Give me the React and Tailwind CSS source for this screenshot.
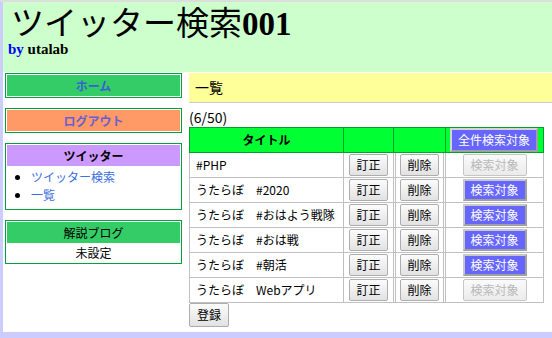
import React from "react";

const rows = [
  { title: "#PHP", target: false },
  { title: "うたらぼ　#2020", target: true },
  { title: "うたらぼ　#おはよう戦隊", target: true },
  { title: "うたらぼ　#おは戦", target: true },
  { title: "うたらぼ　#朝活", target: true },
  { title: "うたらぼ　Webアプリ", target: false },
];

const grayBtn =
  "h-[22px] rounded-[2px] border border-[#adadad] bg-linear-to-b from-[#fcfcfc] to-[#e2e2e2] text-[12px] leading-[20px] text-black";

const SideBox = ({ children }) => (
  <div className="border border-[#00a03c] p-px">{children}</div>
);

export default function App() {
  return (
    <div className="min-h-screen bg-[#ccccff] border-t-2 border-[#dddddd] pl-[3px] font-['Noto_Sans_CJK_JP',sans-serif] text-[12px] text-black">
      <div className="bg-white pb-[5px]">
        {/* Header */}
        <header className="h-[70px] bg-[#ccffcc] pt-[5px]">
          <h1 className="ml-[8px] font-['Liberation_Serif','Noto_Sans_CJK_JP',serif] text-[33px] leading-[34px] whitespace-nowrap">
            <span className="font-normal">ツイッター検索</span>
            <span className="font-bold">001</span>
          </h1>
          <div className="ml-[5px] font-['Liberation_Serif',serif] text-[15px] font-bold leading-[16px]">
            <span className="text-[#0000ff]">by</span> utalab
          </div>
        </header>

        <div className="flex items-start pt-px">
          {/* Sidebar */}
          <aside className="ml-[2px] w-[177px] flex flex-col gap-[10px]">
            <SideBox>
              <div className="h-[21px] bg-[#33cc66] text-center font-bold leading-[21px] text-[#3a5fd0]">
                ホーム
              </div>
            </SideBox>
            <SideBox>
              <div className="h-[21px] bg-[#ff9966] text-center font-bold leading-[21px] text-[#6a5fd0]">
                ログアウト
              </div>
            </SideBox>
            <SideBox>
              <div className="h-[21px] bg-[#cc99ff] text-center font-bold leading-[21px]">
                ツイッター
              </div>
              <ul className="list-disc pl-[24px] pt-[2px] pb-[4px] leading-[18px] text-[#3b6ee0] marker:text-black">
                <li>ツイッター検索</li>
                <li>一覧</li>
              </ul>
            </SideBox>
            <SideBox>
              <div className="h-[21px] bg-[#33cc66] text-center leading-[21px]">
                解説ブログ
              </div>
              <div className="text-center leading-[19px]">未設定</div>
            </SideBox>
          </aside>

          {/* Main */}
          <main className="ml-[7px] flex-1">
            <div className="h-[30px] bg-[#ffff99] border-b border-[#cccccc] pl-[6px] text-[14px] leading-[29px]">
              一覧
            </div>
            <div className="h-[24px] pt-[4px] text-[14px] leading-[20px]">(6/50)</div>

            <div className="w-[355px]">
              <div className="flex h-[26px] border border-[#00a030] bg-[#00ff33]">
                <div className="w-[154px] border-r border-[#00a030] text-center font-bold leading-[24px]">
                  タイトル
                </div>
                <div className="w-[50px] border-r border-[#00a030]" />
                <div className="w-[52px] border-r border-[#00a030]" />
                <div className="flex-1 pl-[4px] pr-[4px]">
                  <button className="h-[24px] w-[88px] border-2 border-[#a0a0a0] border-t-[#d4d4d4] border-l-[#d4d4d4] bg-[#6666ff] text-[12px] leading-[18px] text-white">
                    全件検索対象
                  </button>
                </div>
              </div>

              {rows.map((row, i) => (
                <div
                  key={i}
                  className="flex h-[25px] border-x border-b border-[#c0c0c0]"
                >
                  <div className="w-[154px] border-r border-[#c0c0c0] pl-[6px] leading-[24px] whitespace-nowrap">
                    {row.title}
                  </div>
                  <div className="w-[50px] border-r border-[#c0c0c0] flex items-center justify-center">
                    <button className={`${grayBtn} w-[39px]`}>訂正</button>
                  </div>
                  <div className="w-[2px] border-r border-[#c0c0c0]" />
                  <div className="w-[48px] border-r border-[#c0c0c0] flex items-center justify-center">
                    <button className={`${grayBtn} w-[39px]`}>削除</button>
                  </div>
                  <div className="w-[2px] border-r border-[#c0c0c0]" />
                  <div className="flex-1 flex items-center justify-center">
                    {row.target ? (
                      <button className="h-[22px] w-[64px] border-2 border-[#a0a0a0] border-t-[#c8c8c8] border-l-[#c8c8c8] bg-[#6666ff] text-[12px] leading-[18px] text-white">
                        検索対象
                      </button>
                    ) : (
                      <button
                        disabled
                        className="h-[22px] w-[64px] rounded-[2px] border border-[#c6c6c6] bg-linear-to-b from-[#fafafa] to-[#ebebeb] text-[12px] leading-[20px] text-[#b8b8b8]"
                      >
                        検索対象
                      </button>
                    )}
                  </div>
                </div>
              ))}
            </div>

            <button className={`${grayBtn} h-[24px] w-[40px] block`}>登録</button>
          </main>
        </div>
      </div>
    </div>
  );
}
